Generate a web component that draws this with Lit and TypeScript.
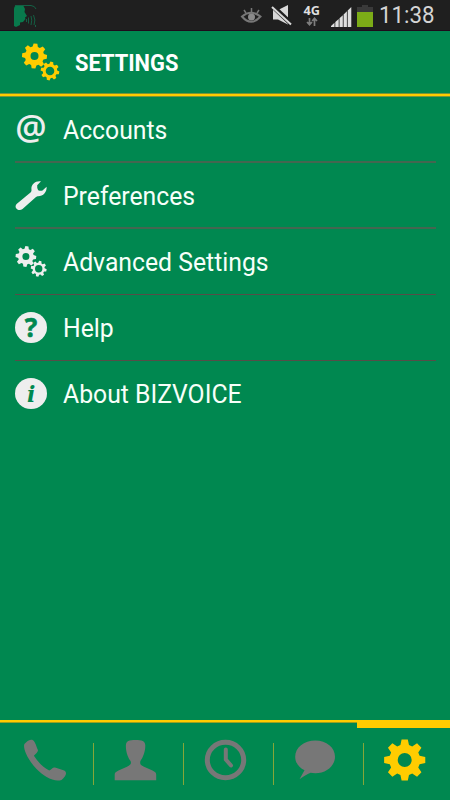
import { LitElement, html, css, svg } from "lit";
import { customElement } from "lit/decorators.js";

/** Outline of an eight-toothed cog with a round hole. */
function gear(cx: number, cy: number, outer: number, body: number, hole: number, turn = 0): string {
  const points: string[] = [];
  for (let i = 0; i < 8; i++) {
    const mid = (i * Math.PI) / 4 + turn;
    for (const [r, a] of [[body, -0.28], [outer, -0.15], [outer, 0.15], [body, 0.28]]) {
      points.push(`${(cx + r * Math.cos(mid + a)).toFixed(2)} ${(cy + r * Math.sin(mid + a)).toFixed(2)}`);
    }
  }
  return `M${points.join("L")}ZM${cx - hole} ${cy}a${hole} ${hole} 0 1 0 ${hole * 2} 0a${hole} ${hole} 0 1 0 ${-hole * 2} 0Z`;
}

const icons = {
  accounts: svg`<text class="at" x="16" y="27" text-anchor="middle">@</text>`,
  preferences: svg`<path d="M1.900 24.800 15.800 13.200C16.700 12.300 16.500 11.400 16.400 9.500 16.500 5 20.500 1.500 26 2.300L22.200 6.300Q21.800 9 23.200 11.200 25.500 12.200 27.500 11.500L31.600 7.800C32 13.300 28 17.600 22.500 17.300L21 17.900 7.500 30.100C3.600 33.200-2 28.500 1.900 24.800Z"/>`,
  advanced: svg`<path fill-rule="evenodd" d="${gear(10.9, 10.500, 10.400, 7.800, 3.500, 0.1)}"/><path fill-rule="evenodd" d="${gear(23.7, 22.800, 8, 6, 3.700, 0.2)}"/>`,
  help: svg`<ellipse cx="16" cy="15.500" rx="16" ry="15.500"/><text class="question" x="16" y="24.800" text-anchor="middle">?</text>`,
  about: svg`<ellipse cx="16" cy="15.500" rx="16" ry="15.500"/><text class="info" x="16.300" y="23.800" text-anchor="middle">i</text>`,
};

const items = [
  { label: "Accounts", icon: icons.accounts },
  { label: "Preferences", icon: icons.preferences },
  { label: "Advanced Settings", icon: icons.advanced },
  { label: "Help", icon: icons.help },
  { label: "About BIZVOICE", icon: icons.about },
];

const tabs = [
  svg`<path d="M3 5.500C5.500 3.200 8 2.200 10 3.300 12.300 5 13.500 10 14.900 13 15.500 15 12.300 17 10.900 18.700 14.800 24.800 19.700 30.300 26.300 33.600 28.300 32.600 29.800 30 32 30.500L40.500 33.200C45 35 43 39.500 38.500 43 31 45.500 20.500 39.500 13.300 31.800 5.500 23.500-.5 12 1.400 6.900Z"/>`,
  svg`<path d="M22.500 3C29 3 32.200 4 32.300 8.500 32.400 15 29.500 21.500 27.400 24 26.700 27 27.500 28 31 29.700L39.500 33.500C42 34.700 43.200 35.800 43.200 37.500V43.200H1.700V37.500C1.700 35.800 3 34.700 5.500 33.500L14 29.700C17.500 28 18.500 27 17.600 24 15.500 21.500 12.600 15 12.900 8.500 13 4 16 3 22.500 3Z"/>`,
  svg`<ellipse class="ring" cx="22.500" cy="23" rx="18.200" ry="17.700"/><path class="hands" d="M22.800 12.500V22.500L28 28.500"/>`,
  svg`<path d="M22.300 3.500C33.500 3.500 42 10.700 42 19.700S33.500 36.300 22.300 36.300C20.500 36.300 19 36 17.600 35.800 14 37.200 10.400 39.500 6.500 42.300L11.500 33.300C6 30.500 2.200 25.800 2.200 19.700 2.200 10.700 11 3.500 22.300 3.500Z"/>`,
  svg`<path fill-rule="evenodd" d="${gear(22.7, 23, 20.800, 15.500, 7)}"/>`,
];

@customElement("status-bar")
class StatusBar extends LitElement {
  static styles = css`
    :host { display: flex; height: 31px; box-sizing: border-box; background: #1f1f1f; border-bottom: 1px solid #1f0b1c; align-items: flex-start; }
    svg { display: block; flex: none; }
    .spacer { flex: 1; }
    .net { font: 700 12px "Open Sans", sans-serif; fill: #dedede; }
    .time { width: 71px; flex: none; font: 400 24px/31px Roboto, sans-serif; color: #d4d4d4; }
    .time span { display: inline-block; transform: scaleX(0.93); transform-origin: 0 50%; }
  `;
  render() {
    return html`
      <svg width="40" height="30">
        <path fill="#087a4c" d="M14 26V9Q14 6 17 5H23L25 9 24.500 12 27 16 25 17.500 25.500 19 23 22 20 22.500V25L16 27Z"/>
        <path fill="none" stroke="#146044" d="M15 5.500H31Q35 6 36 9M26.500 19V22M28.500 17.500V23.500M31 16Q32.500 20 31 25M33.500 15Q36 20 34 25M35.500 25V27"/>
      </svg>
      <div class="spacer"></div>
      <svg width="139" height="30">
        <g fill="none" stroke="#777" stroke-width="2">
          <path d="M2 16.500Q11 9 20.500 16.500Q11 27 2 16.500Z"/>
          <path stroke-width="1.500" d="M11.500 12V8M6 13 4 10M17 13 19 10"/>
        </g>
        <circle cx="11.500" cy="17" r="3.500" fill="#8a8a8a"/>
        <path fill="#d8d8d8" d="M33 10H38L48 5V24.500L38 19.500H33Z"/>
        <path stroke="#1f1f1f" stroke-width="5" d="M32 5.500 53 25.500"/>
        <path stroke="#d8d8d8" stroke-width="2" d="M32 7 51 24.500"/>
        <text class="net" x="63.500" y="14.500" textLength="16.500" lengthAdjust="spacingAndGlyphs">4G</text>
        <g stroke="#7d7d7d" stroke-width="1.700" fill="none"><path d="M69.500 18V24M67 22 69.500 24.700 72 22M74.500 26V19M72.200 21 74.500 18.300 77 21"/></g>
        <path fill="#dedede" d="M91 27V26L94.500 22.800V27ZM95.300 27V22L98.700 19V27ZM99.500 27V18.200L102.800 15.200V27ZM103.600 27V14.400L106.900 11.300V27ZM107.700 27V10.500L111.300 7V27Z"/>
        <path fill="#3a3a3a" d="M122 5H128V7H133V12H117V7H122Z"/><path fill="#7cac17" d="M117 12H133V27H117Z"/>
      </svg>
      <div class="time"><span>11:38</span></div>`;
  }
}

@customElement("settings-list")
class SettingsList extends LitElement {
  static styles = css`
    :host { display: flex; flex-direction: column; padding: 0 14px 0 15px; }
    .row { display: flex; align-items: center; box-sizing: border-box; height: 66px; border-bottom: 1px solid #574d48; }
    .row:nth-child(-n + 2) { border-bottom: 2px solid #446650; }
    .row:last-child { border-bottom-color: transparent; }
    svg { display: block; width: 32px; height: 32px; margin-right: 16px; fill: #eee; overflow: visible; }
    .at { font: 600 35px "Open Sans", sans-serif; }
    .question { font: 700 26px "Noto Sans", sans-serif; fill: #008850; stroke: #008850; stroke-width: 0.6px; }
    .info { font: italic 700 22px "DejaVu Serif", serif; fill: #008850; }
    .label { padding-top: 2px; font: 400 25px/32px Roboto, sans-serif; color: #f7fff9; white-space: nowrap; transform: scaleX(0.99); transform-origin: 0 50%; }
    .row:nth-child(-n + 2) .label { padding-top: 4px; }
  `;
  render() {
    return items.map((item) => html`<div class="row"><svg viewBox="0 0 32 32">${item.icon}</svg><span class="label">${item.label}</span></div>`);
  }
}

@customElement("tab-bar")
class TabBar extends LitElement {
  static styles = css`
    :host { display: block; height: 80px; }
    .track { height: 8px; display: flex; align-items: flex-start; }
    .line { flex: 1; height: 2px; background: #fc0; border-bottom: 1px solid #9a9f20; }
    .active { width: 93px; height: 8px; background: #fc0; }
    .tabs { display: grid; grid-template-columns: 93px repeat(3, 90px) 87px; padding-top: 6px; }
    .tab { display: flex; justify-content: center; height: 66px; position: relative; }
    .tab:not(:last-child)::after { content: ""; position: absolute; right: -1px; top: 9px; width: 1px; height: 42px; background: #85a638; }
    svg { display: block; width: 45px; height: 46px; margin-top: 3px; fill: #777; }
    .ring { fill: none; stroke: #777; stroke-width: 5; }
    .hands { fill: none; stroke: #777; stroke-width: 4; stroke-linecap: round; }
    .tab:last-child svg { fill: #fc0; margin-right: 4px; }
    .tab:first-child svg { margin-right: 2px; }
    .tab:nth-child(2) svg { margin-right: 6px; }
    .tab:nth-child(3) svg { margin-right: 5px; }
    .tab:nth-child(4) svg { margin-right: 6px; }
  `;
  render() {
    return html`<div class="track"><div class="line"></div><div class="active"></div></div>
      <div class="tabs">${tabs.map((icon) => html`<div class="tab"><svg viewBox="0 0 45 46">${icon}</svg></div>`)}</div>`;
  }
}

@customElement("app-root")
class AppRoot extends LitElement {
  static styles = css`
    :host { display: flex; flex-direction: column; width: 450px; height: 800px; overflow: hidden; background: #008850; }
    .header { display: flex; align-items: center; height: 62px; padding-left: 20px; flex: none; }
    .rule { flex: none; height: 2px; background: #fc0; border: solid #789538; border-width: 1px 0; }
    .header svg { width: 42px; height: 44px; fill: #fc0; margin-right: 13px; }
    .title { padding-top: 4px; font: 700 23px/30px Roboto, sans-serif; color: #fff; transform: scaleX(0.95); transform-origin: 0 50%; }
    settings-list { flex: 1; }
  `;
  render() {
    return html`
      <status-bar></status-bar>
      <div class="header">
        <svg viewBox="0 0 42 44"><path fill-rule="evenodd" d="${gear(14.5, 16, 12.600, 9.600, 4, 0.08)}"/><path fill-rule="evenodd" d="${gear(30, 31, 9.400, 7.200, 4.300, 0.2)}"/></svg>
        <span class="title">SETTINGS</span>
      </div>
      <div class="rule"></div>
      <settings-list></settings-list>
      <tab-bar></tab-bar>`;
  }
}
